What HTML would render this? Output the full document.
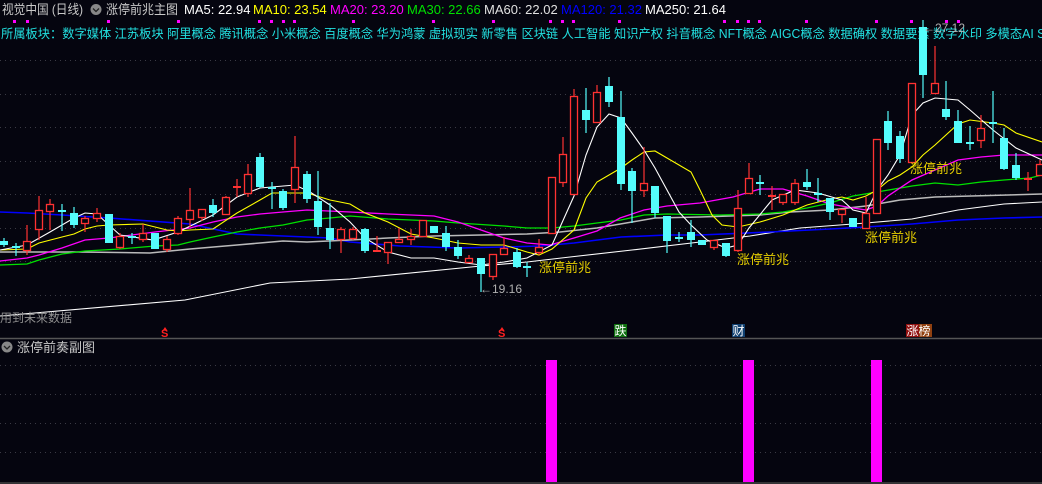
<!DOCTYPE html>
<html><head><meta charset="utf-8"><style>
html,body{margin:0;padding:0;background:#05050f;width:1042px;height:484px;overflow:hidden}
svg{display:block}
text{font-family:"Liberation Sans","Noto Sans CJK SC",sans-serif}
</style></head><body>
<svg width="1042" height="484" viewBox="0 0 1042 484" xmlns="http://www.w3.org/2000/svg">
<rect width="1042" height="484" fill="#05050f"/>
<g stroke="#3a3a44" stroke-width="1" stroke-dasharray="1,4">
<line x1="0" y1="60.5" x2="1042" y2="60.5"/><line x1="0" y1="94.5" x2="1042" y2="94.5"/>
<line x1="0" y1="127.5" x2="1042" y2="127.5"/><line x1="0" y1="161.5" x2="1042" y2="161.5"/>
<line x1="0" y1="194.5" x2="1042" y2="194.5"/><line x1="0" y1="228.5" x2="1042" y2="228.5"/>
<line x1="0" y1="261.5" x2="1042" y2="261.5"/><line x1="0" y1="295.5" x2="1042" y2="295.5"/>
<line x1="0" y1="365.5" x2="1042" y2="365.5"/><line x1="0" y1="394.5" x2="1042" y2="394.5"/>
<line x1="0" y1="423.5" x2="1042" y2="423.5"/><line x1="0" y1="452.5" x2="1042" y2="452.5"/>
</g>
<line x1="0" y1="338.5" x2="1042" y2="338.5" stroke="#555" stroke-width="1.5"/>
<line x1="0" y1="483" x2="1042" y2="483" stroke="#444" stroke-width="1.5"/>

<!-- header -->
<text x="2" y="14" font-size="13" fill="#c8c8c8" textLength="81" lengthAdjust="spacingAndGlyphs">视觉中国 (日线)</text>
<circle cx="96" cy="9.5" r="5.5" fill="#888"/><path d="M93 8.5l3 3 3-3" stroke="#222" stroke-width="1.3" fill="none"/>
<text x="106" y="14" font-size="13" fill="#c8c8c8" textLength="72" lengthAdjust="spacingAndGlyphs">涨停前兆主图</text>
<text x="184" y="14" font-size="13" fill="#ffffff">MA5: 22.94</text>
<text x="253" y="14" font-size="13" fill="#ffff00">MA10: 23.54</text>
<text x="330" y="14" font-size="13" fill="#ff00ff">MA20: 23.20</text>
<text x="407" y="14" font-size="13" fill="#00e000">MA30: 22.66</text>
<text x="484" y="14" font-size="13" fill="#e0e0e0">MA60: 22.02</text>
<text x="561" y="14" font-size="13" fill="#0000ff">MA120: 21.32</text>
<text x="645" y="14" font-size="13" fill="#ffffff">MA250: 21.64</text>
<g fill="#ff00ff">
<rect x="13" y="20" width="3" height="3"/><rect x="26" y="20" width="3" height="3"/><rect x="107" y="20" width="3" height="3"/><rect x="177" y="20" width="3" height="3"/><rect x="258" y="20" width="3" height="3"/><rect x="270" y="20" width="3" height="3"/><rect x="282" y="20" width="3" height="3"/><rect x="293" y="20" width="3" height="3"/><rect x="352" y="20" width="3" height="3"/><rect x="432" y="20" width="3" height="3"/><rect x="492" y="20" width="3" height="3"/><rect x="549" y="20" width="3" height="3"/><rect x="561" y="20" width="3" height="3"/><rect x="572" y="20" width="3" height="3"/><rect x="618" y="20" width="3" height="3"/><rect x="723" y="20" width="3" height="3"/><rect x="736" y="20" width="3" height="3"/><rect x="747" y="20" width="3" height="3"/><rect x="758" y="20" width="3" height="3"/><rect x="805" y="20" width="3" height="3"/><rect x="875" y="20" width="3" height="3"/><rect x="910" y="20" width="3" height="3"/><rect x="945" y="20" width="3" height="3"/><rect x="957" y="20" width="3" height="3"/>
</g>
<text x="1" y="38" font-size="12.5" fill="#22e0e0" textLength="1062" lengthAdjust="spacingAndGlyphs">所属板块：数字媒体 江苏板块 阿里概念 腾讯概念 小米概念 百度概念 华为鸿蒙 虚拟现实 新零售 区块链 人工智能 知识产权 抖音概念 NFT概念 AIGC概念 数据确权 数据要素 数字水印 多模态AI Sora</text>

<!-- MA lines -->
<g fill="none" stroke-width="1.1">
<polyline stroke="#ffffff" points="0,316 185,300 270,283 350,279 481,266 527,262 570,257 632,250 700,242 750,236 800,228 866,223 912,219 958,210 1004,204 1042,202"/>
<polyline stroke="#0000ff" stroke-width="1.6" points="0,212 27,213 62,215 109,218 190,224 237,234 283,236 330,238 350,242 400,246 458,248 504,247 540,246 574,243 621,237 667,235 700,235 770,232 830,229 866,227 912,224 958,220 1004,218 1042,217"/>
<polyline stroke="#bbbbbb" stroke-width="1.5" points="0,252 80,252 150,253 190,249 237,245 283,241 307,242 350,240 388,238 434,236 481,235 527,234 560,232 597,228 632,222 655,218 700,217 760,215 790,212 830,210 866,206 900,200 935,197 1042,194"/>
<polyline stroke="#00e000" stroke-width="1.3" points="0,265 27,264 39,260 62,254 85,251 120,249 155,246 178,245 190,242 213,237 237,232 260,228 283,225 307,220 330,218 350,216 388,219 434,221 458,223 504,226 527,228 552,228 574,226 597,223 621,220 644,215 667,214 720,215 760,214 783,212 807,208 830,203 853,196 877,192 912,186 935,183 958,185 981,182 1004,180 1030,178 1042,175"/>
<polyline stroke="#ff00ff" stroke-width="1.3" points="0,261 27,258 39,255 62,248 85,240 109,238 155,232 190,228 213,222 237,217 260,214 283,212 307,210 350,212 388,214 411,215 434,216 458,222 481,230 504,238 527,243 550,245 574,238 597,231 620,218 644,210 667,206 700,203 733,197 760,189 783,189 807,196 830,204 853,208 866,210 877,206 888,196 912,180 935,170 958,160 981,157 1004,155 1042,155"/>
<polyline stroke="#ffff00" points="0,250 27,249 39,243 62,237 74,234 85,229 97,226 109,225 143,224 155,227 167,230 178,231 190,230 213,229 237,213 260,200 272,193 307,193 330,200 350,204 365,213 388,222 411,234 434,238 458,243 481,245 504,245 527,252 539,255 552,249 574,230 586,198 597,182 609,175 621,168 632,160 644,152 655,151 667,158 679,165 691,172 700,190 712,215 722,225 738,227 760,222 783,215 807,205 830,199 842,197 853,200 866,196 877,190 888,181 900,175 912,167 923,155 935,145 958,124 970,120 993,123 1004,125 1016,133 1042,142"/>
<polyline stroke="#ffffff" points="0,250 27,245 50,232 74,218 85,213 97,214 109,225 120,235 153,240 178,232 213,215 237,197 260,188 295,185 310,192 330,205 350,222 365,238 388,252 411,258 434,258 458,262 481,265 504,262 527,258 552,245 574,196 586,155 597,127 609,114 621,118 632,133 644,150 655,168 667,190 679,212 691,225 707,240 726,248 738,245 749,228 772,200 795,190 818,193 842,200 853,210 866,213 877,190 888,175 900,155 912,115 923,103 935,98 958,100 970,110 993,130 1016,148 1042,160"/>
</g>

<!-- candles: cyan -->
<g stroke="#54fcfc" stroke-width="1.2">
<line x1="4" y1="238" x2="4" y2="247"/><line x1="16" y1="243" x2="16" y2="256"/><line x1="62" y1="204" x2="62" y2="231"/><line x1="74" y1="207" x2="74" y2="228"/><line x1="132" y1="233" x2="132" y2="244"/><line x1="213" y1="199" x2="213" y2="217"/><line x1="260" y1="153" x2="260" y2="188"/><line x1="272" y1="182" x2="272" y2="209"/><line x1="283" y1="189" x2="283" y2="210"/><line x1="307" y1="171" x2="307" y2="203"/><line x1="318" y1="171" x2="318" y2="235"/><line x1="330" y1="203" x2="330" y2="249"/><line x1="365" y1="228" x2="365" y2="253"/><line x1="446" y1="226" x2="446" y2="251"/><line x1="458" y1="240" x2="458" y2="259"/><line x1="481" y1="258" x2="481" y2="292"/><line x1="517" y1="248" x2="517" y2="268"/><line x1="527" y1="262" x2="527" y2="277"/><line x1="586" y1="88" x2="586" y2="133"/><line x1="609" y1="77" x2="609" y2="107"/><line x1="621" y1="91" x2="621" y2="190"/><line x1="632" y1="168" x2="632" y2="223"/><line x1="655" y1="186" x2="655" y2="218"/><line x1="667" y1="216" x2="667" y2="253"/><line x1="679" y1="232" x2="679" y2="242"/><line x1="691" y1="220" x2="691" y2="247"/><line x1="726" y1="243" x2="726" y2="257"/><line x1="760" y1="175" x2="760" y2="195"/><line x1="807" y1="169" x2="807" y2="190"/><line x1="818" y1="178" x2="818" y2="202"/><line x1="830" y1="198" x2="830" y2="220"/><line x1="888" y1="111" x2="888" y2="150"/><line x1="900" y1="131" x2="900" y2="163"/><line x1="923" y1="20" x2="923" y2="98"/><line x1="946" y1="81" x2="946" y2="120"/><line x1="958" y1="110" x2="958" y2="143"/><line x1="970" y1="126" x2="970" y2="150"/><line x1="993" y1="91" x2="993" y2="143"/><line x1="1004" y1="128" x2="1004" y2="170"/><line x1="1016" y1="153" x2="1016" y2="180"/>
</g>
<g fill="#54fcfc">
<rect x="0" y="241" width="8" height="4"/><rect x="12" y="246" width="8" height="2"/><rect x="58" y="210" width="8" height="2"/><rect x="70" y="213" width="8" height="12"/><rect x="105" y="214" width="8" height="29"/><rect x="128" y="236" width="8" height="2"/><rect x="151" y="233" width="8" height="16"/><rect x="209" y="205" width="8" height="8"/><rect x="256" y="157" width="8" height="30"/><rect x="268" y="187" width="8" height="2"/><rect x="279" y="191" width="8" height="17"/><rect x="303" y="174" width="8" height="25"/><rect x="314" y="201" width="8" height="26"/><rect x="326" y="228" width="8" height="12"/><rect x="361" y="229" width="8" height="22"/><rect x="430" y="226" width="8" height="7"/><rect x="442" y="233" width="8" height="14"/><rect x="454" y="247" width="8" height="9"/><rect x="477" y="258" width="8" height="16"/><rect x="513" y="252" width="8" height="15"/><rect x="523" y="266" width="8" height="2"/><rect x="582" y="110" width="8" height="10"/><rect x="605" y="86" width="8" height="16"/><rect x="617" y="117" width="8" height="67"/><rect x="628" y="171" width="8" height="20"/><rect x="651" y="186" width="8" height="27"/><rect x="663" y="216" width="8" height="25"/><rect x="675" y="237" width="8" height="2"/><rect x="687" y="232" width="8" height="8"/><rect x="698" y="240" width="8" height="5"/><rect x="722" y="243" width="8" height="13"/><rect x="756" y="182" width="8" height="2"/><rect x="803" y="182" width="8" height="5"/><rect x="814" y="193" width="8" height="2"/><rect x="826" y="198" width="8" height="14"/><rect x="849" y="218" width="8" height="9"/><rect x="884" y="121" width="8" height="22"/><rect x="896" y="136" width="8" height="23"/><rect x="919" y="27" width="8" height="48"/><rect x="942" y="109" width="8" height="8"/><rect x="954" y="121" width="8" height="22"/><rect x="966" y="142" width="8" height="2"/><rect x="989" y="122" width="8" height="2"/><rect x="1000" y="138" width="8" height="31"/><rect x="1012" y="165" width="8" height="13"/>
</g>
<!-- red -->
<g stroke="#ff3232" stroke-width="1.2">
<line x1="27" y1="225" x2="27" y2="255"/><line x1="39" y1="196" x2="39" y2="240"/><line x1="50" y1="199" x2="50" y2="230"/><line x1="85" y1="216" x2="85" y2="232"/><line x1="97" y1="208" x2="97" y2="222"/><line x1="120" y1="233" x2="120" y2="249"/><line x1="143" y1="224" x2="143" y2="242"/><line x1="167" y1="236" x2="167" y2="252"/><line x1="178" y1="216" x2="178" y2="235"/><line x1="190" y1="188" x2="190" y2="227"/><line x1="202" y1="209" x2="202" y2="221"/><line x1="226" y1="196" x2="226" y2="215"/><line x1="237" y1="179" x2="237" y2="197"/><line x1="248" y1="164" x2="248" y2="197"/><line x1="295" y1="136" x2="295" y2="203"/><line x1="341" y1="227" x2="341" y2="253"/><line x1="353" y1="227" x2="353" y2="240"/><line x1="377" y1="236" x2="377" y2="252"/><line x1="388" y1="242" x2="388" y2="264"/><line x1="399" y1="228" x2="399" y2="242"/><line x1="411" y1="229" x2="411" y2="245"/><line x1="469" y1="255" x2="469" y2="262"/><line x1="493" y1="254" x2="493" y2="280"/><line x1="504" y1="237" x2="504" y2="254"/><line x1="539" y1="239" x2="539" y2="255"/><line x1="563" y1="137" x2="563" y2="187"/><line x1="574" y1="89" x2="574" y2="194"/><line x1="597" y1="85" x2="597" y2="122"/><line x1="644" y1="147" x2="644" y2="197"/><line x1="714" y1="240" x2="714" y2="250"/><line x1="738" y1="190" x2="738" y2="252"/><line x1="749" y1="163" x2="749" y2="193"/><line x1="772" y1="186" x2="772" y2="210"/><line x1="783" y1="194" x2="783" y2="205"/><line x1="795" y1="179" x2="795" y2="205"/><line x1="842" y1="209" x2="842" y2="223"/><line x1="866" y1="197" x2="866" y2="229"/><line x1="935" y1="46" x2="935" y2="93"/><line x1="981" y1="115" x2="981" y2="148"/><line x1="1028" y1="172" x2="1028" y2="191"/><line x1="1040" y1="160" x2="1040" y2="176"/>
<line x1="233" y1="187" x2="241" y2="187" stroke-width="2"/><line x1="373" y1="251" x2="381" y2="251" stroke-width="2"/><line x1="768" y1="196" x2="776" y2="196" stroke-width="2"/><line x1="1024" y1="179" x2="1032" y2="179" stroke-width="2"/>
</g>
<g stroke="#ff3232" stroke-width="1.3" fill="#05050f">
<rect x="23.5" y="241.5" width="7" height="9"/><rect x="35.5" y="210.5" width="7" height="19"/><rect x="46.5" y="204.5" width="7" height="7"/><rect x="81.5" y="218.5" width="7" height="5"/><rect x="93.5" y="213.5" width="7" height="5"/><rect x="116.5" y="236.5" width="7" height="11"/><rect x="139.5" y="233.5" width="7" height="6"/><rect x="163.5" y="239.5" width="7" height="10"/><rect x="174.5" y="218.5" width="7" height="15"/><rect x="186.5" y="210.5" width="7" height="9"/><rect x="198.5" y="209.5" width="7" height="8"/><rect x="222.5" y="197.5" width="7" height="17"/><rect x="244.5" y="174.5" width="7" height="19"/><rect x="291.5" y="167.5" width="7" height="22"/><rect x="337.5" y="229.5" width="7" height="10"/><rect x="349.5" y="229.5" width="7" height="9"/><rect x="384.5" y="242.5" width="7" height="10"/><rect x="395.5" y="239.5" width="7" height="3"/><rect x="407.5" y="236.5" width="7" height="3"/><rect x="419.5" y="220.5" width="7" height="16"/><rect x="465.5" y="258.5" width="7" height="4"/><rect x="489.5" y="254.5" width="7" height="22"/><rect x="500.5" y="248.5" width="7" height="6"/><rect x="535.5" y="247.5" width="7" height="5"/><rect x="548.5" y="177.5" width="7" height="56"/><rect x="559.5" y="154.5" width="7" height="28"/><rect x="570.5" y="96.5" width="7" height="98"/><rect x="593.5" y="92.5" width="7" height="30"/><rect x="640.5" y="183.5" width="7" height="7"/><rect x="710.5" y="240.5" width="7" height="7"/><rect x="734.5" y="208.5" width="7" height="42"/><rect x="745.5" y="178.5" width="7" height="15"/><rect x="779.5" y="194.5" width="7" height="8"/><rect x="791.5" y="183.5" width="7" height="19"/><rect x="838.5" y="209.5" width="7" height="5"/><rect x="862.5" y="213.5" width="7" height="15"/><rect x="873.5" y="139.5" width="7" height="74"/><rect x="908.5" y="83.5" width="7" height="79"/><rect x="931.5" y="83.5" width="7" height="10"/><rect x="977.5" y="128.5" width="7" height="12"/><rect x="1036.5" y="164.5" width="7" height="11"/>
</g>
<line x1="58" y1="211" x2="66" y2="211" stroke="#54fcfc" stroke-width="2"/>

<!-- labels -->
<g font-size="13" fill="#e8d000">
<text x="539" y="272">涨停前兆</text><text x="737" y="264">涨停前兆</text><text x="865" y="242">涨停前兆</text><text x="910" y="173">涨停前兆</text>
</g>
<text x="480" y="293" font-size="12" fill="#b0b0b0">←19.16</text>
<text x="923" y="32" font-size="12" fill="#b0b0b0">←27.12</text>
<text x="0" y="322" font-size="12" fill="#909090">用到未来数据</text>

<!-- markers -->
<g font-size="11" font-weight="bold" fill="#ff2020">
<text x="161" y="337">S</text><text x="498" y="337">S</text>
</g>
<path d="M165 327l-2 3h4z M502 327l-2 3h4z" fill="#ff2020"/>
<rect x="614" y="324" width="13" height="13" fill="#107010"/><text x="614.5" y="335" font-size="12" fill="#ffffff">跌</text>
<rect x="732" y="324" width="13" height="13" fill="#104070"/><text x="732.5" y="335" font-size="12" fill="#ffffff">财</text>
<rect x="906" y="324" width="13" height="13" fill="#901010"/><rect x="919" y="324" width="13" height="13" fill="#904010"/>
<text x="906.5" y="335" font-size="12" fill="#ffffff">涨榜</text>

<!-- sub chart -->
<circle cx="7" cy="347" r="5.5" fill="#888"/><path d="M4 346l3 3 3-3" stroke="#222" stroke-width="1.3" fill="none"/>
<text x="17" y="352" font-size="13" fill="#c8c8c8">涨停前奏副图</text>
<g fill="#ff00ff">
<rect x="546" y="360" width="11" height="122"/><rect x="743" y="360" width="11" height="122"/><rect x="871" y="360" width="11" height="122"/>
</g>
</svg>
</body></html>
